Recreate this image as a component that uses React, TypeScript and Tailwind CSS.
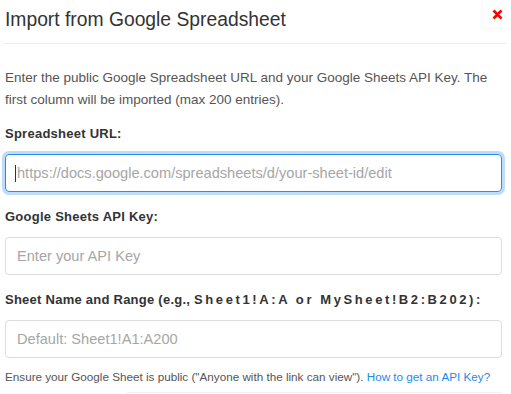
import React from "react";

const fields = [
  {
    id: "sheet-url",
    label: <>Spreadsheet URL:</>,
    placeholder: "https://docs.google.com/spreadsheets/d/your-sheet-id/edit",
    focused: true,
  },
  {
    id: "api-key",
    label: <>Google Sheets API Key:</>,
    placeholder: "Enter your API Key",
    focused: false,
  },
  {
    id: "range",
    label: (
      <>
        Sheet Name and Range (e.g.,{" "}
        <span className="tracking-[2.6px]">Sheet1!A:A or MySheet!B2:B202):</span>
      </>
    ),
    placeholder: "Default: Sheet1!A1:A200",
    focused: false,
  },
];

function CloseButton() {
  return (
    <button className="absolute top-0 right-0 w-[28px] h-[28px] flex items-center justify-center bg-white shadow-[0_0_3px_rgba(0,0,0,0.08)]">
      <svg width="11" height="11" viewBox="0 0 11 11">
        <path d="M1.5 1.5 L9.5 9.5 M9.5 1.5 L1.5 9.5" stroke="#ff0000" strokeWidth="2.6" strokeLinecap="butt" />
      </svg>
    </button>
  );
}

export default function App() {
  return (
    <div className="relative w-[511px] h-[394px] overflow-hidden bg-white font-['Liberation_Sans',Arial,sans-serif]">
      <CloseButton />

      {/* header */}
      <div className="mx-[4px] pt-[8px] pb-[11px] border-b border-[#eeeeee]">
        <h2 className="pl-[1px] text-[19.3px] leading-[24px] text-[#333333]">Import from Google Spreadsheet</h2>
      </div>

      <div className="pl-[5px] pr-[9px]">
        <p className="mt-[23px] text-[13.5px] leading-[22px] text-[#555555]">
          Enter the public Google Spreadsheet URL and your Google Sheets API Key. The first column will be imported (max 200 entries).
        </p>

        {fields.map((f, i) => (
          <div key={f.id} className={i === 0 ? "mt-[14px]" : "mt-[16px]"}>
            <label htmlFor={f.id} className="block mb-[11px] text-[13px] leading-[18px] font-bold tracking-[0.25px] text-[#333333] whitespace-nowrap">
              {f.label}
            </label>
            <div className="relative">
              <input
                id={f.id}
                type="text"
                placeholder={f.placeholder}
                className={
                  f.focused
                    ? "block w-full h-[38px] px-[11px] rounded-[4px] border border-[#2b8cf0] ring-[3px] ring-[#bcdcfb] outline-none text-[14.6px] text-[#333] placeholder:text-[#a6a6a6]"
                    : "block w-full h-[38px] px-[11px] rounded-[4px] border border-[#dddddd] outline-none text-[14.6px] text-[#333] placeholder:text-[#a6a6a6]"
                }
              />
              {f.focused && <span className="absolute left-[10px] top-[11px] w-[1px] h-[17px] bg-[#333333]" />}
            </div>
          </div>
        ))}

        <p className="mt-[11px] text-[11.7px] leading-[16px] text-[#555555] whitespace-nowrap">
          Ensure your Google Sheet is public ("Anyone with the link can view").{" "}
          <a href="#" className="text-[#1a8cf0]">How to get an API Key?</a>
        </p>
      </div>

      <div className="mt-[7px] ml-[127px] mr-[10px] border-t border-[#f0f0f0]" />
    </div>
  );
}
